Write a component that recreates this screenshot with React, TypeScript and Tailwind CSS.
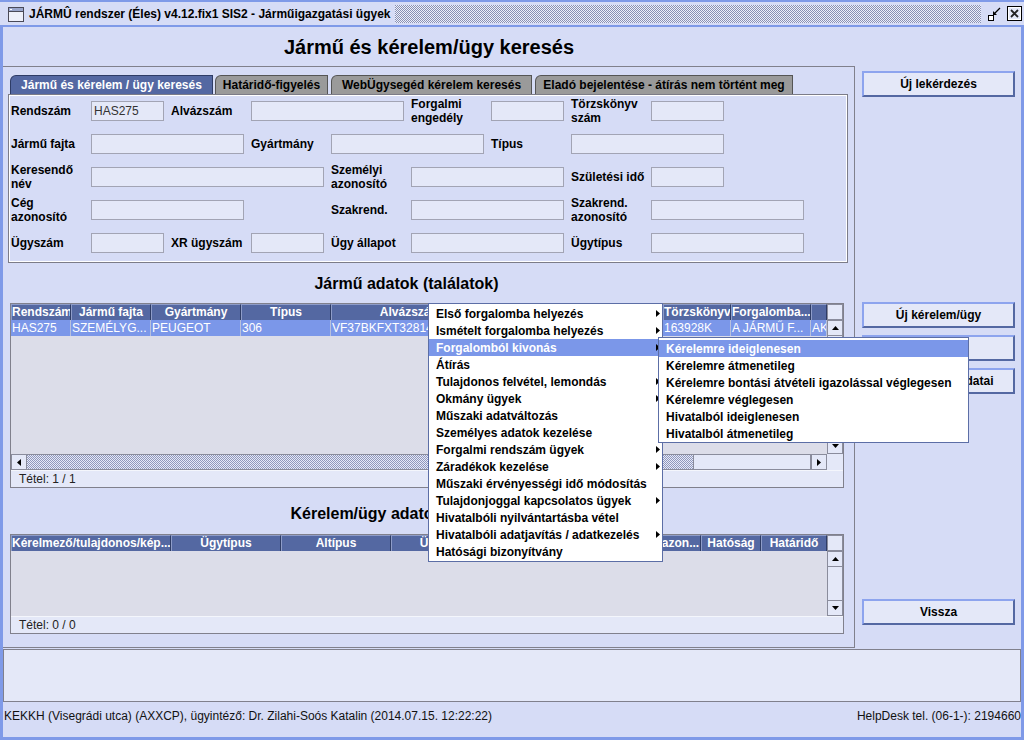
import React from "react";

type Field = { cls: string; lines?: string[]; input?: boolean; value?: string };

const formRows: Field[][] = [
  [
    { cls: "col-start-1", lines: ["Rendszám"] },
    { cls: "col-start-2 col-span-1", input: true, value: "HAS275" },
    { cls: "col-start-3", lines: ["Alvázszám"] },
    { cls: "col-start-4 col-span-2", input: true },
    { cls: "col-start-6", lines: ["Forgalmi", "engedély"] },
    { cls: "col-start-7 col-span-1", input: true },
    { cls: "col-start-8", lines: ["Törzskönyv", "szám"] },
    { cls: "col-start-9 col-span-1", input: true },
  ],
  [
    { cls: "col-start-1", lines: ["Jármű fajta"] },
    { cls: "col-start-2 col-span-2", input: true },
    { cls: "col-start-4", lines: ["Gyártmány"] },
    { cls: "col-start-5 col-span-2", input: true },
    { cls: "col-start-7", lines: ["Típus"] },
    { cls: "col-start-8 col-span-2", input: true },
  ],
  [
    { cls: "col-start-1", lines: ["Keresendő", "név"] },
    { cls: "col-start-2 col-span-3", input: true },
    { cls: "col-start-5", lines: ["Személyi", "azonosító"] },
    { cls: "col-start-6 col-span-2", input: true },
    { cls: "col-start-8", lines: ["Születési idő"] },
    { cls: "col-start-9 col-span-1", input: true },
  ],
  [
    { cls: "col-start-1", lines: ["Cég", "azonosító"] },
    { cls: "col-start-2 col-span-2", input: true },
    { cls: "col-start-5", lines: ["Szakrend."] },
    { cls: "col-start-6 col-span-2", input: true },
    { cls: "col-start-8", lines: ["Szakrend.", "azonosító"] },
    { cls: "col-start-9 col-span-2", input: true },
  ],
  [
    { cls: "col-start-1", lines: ["Ügyszám"] },
    { cls: "col-start-2 col-span-1", input: true },
    { cls: "col-start-3", lines: ["XR ügyszám"] },
    { cls: "col-start-4 col-span-1", input: true },
    { cls: "col-start-5", lines: ["Ügy állapot"] },
    { cls: "col-start-6 col-span-2", input: true },
    { cls: "col-start-8", lines: ["Ügytípus"] },
    { cls: "col-start-9 col-span-2", input: true },
  ],
];

const vehicleCols = [
  { w: "w-[60px]", h: "Rendszám", d: "HAS275" },
  { w: "w-[80px]", h: "Jármű fajta", d: "SZEMÉLYG..." },
  { w: "w-[90px]", h: "Gyártmány", d: "PEUGEOT" },
  { w: "w-[90px]", h: "Típus", d: "306" },
  { w: "w-[159px]", h: "Alvázszám", d: "VF37BKFXT32814653" },
  { w: "w-[173px]", h: "Forgalmi engedély", d: "LB48211" },
  { w: "w-[68px]", h: "Törzskönyv", d: "163928K" },
  { w: "w-[80px]", h: "Forgalomba...", d: "A JÁRMŰ F..." },
  { w: "w-[16px]", h: "", d: "AKTÍV" },
];

const caseCols = [
  { w: "w-[160px]", h: "Kérelmező/tulajdonos/kép..." },
  { w: "w-[110px]", h: "Ügytípus" },
  { w: "w-[110px]", h: "Altípus" },
  { w: "w-[110px]", h: "Ügyszám" },
  { w: "w-[119px]", h: "Állapot" },
  { w: "w-[81px]", h: "Ügyfél azon..." },
  { w: "w-[60px]", h: "Hatóság" },
  { w: "w-[66px]", h: "Határidő" },
];

const mainMenu = [
  { t: "Első forgalomba helyezés", sub: true },
  { t: "Ismételt forgalomba helyezés", sub: true },
  { t: "Forgalomból kivonás", sub: true, on: true },
  { t: "Átírás" },
  { t: "Tulajdonos felvétel, lemondás", sub: true },
  { t: "Okmány ügyek", sub: true },
  { t: "Műszaki adatváltozás" },
  { t: "Személyes adatok kezelése" },
  { t: "Forgalmi rendszám ügyek", sub: true },
  { t: "Záradékok kezelése", sub: true },
  { t: "Műszaki érvényességi idő módosítás" },
  { t: "Tulajdonjoggal kapcsolatos ügyek", sub: true },
  { t: "Hivatalbóli nyilvántartásba vétel" },
  { t: "Hivatalbóli adatjavítás / adatkezelés", sub: true },
  { t: "Hatósági bizonyítvány" },
];

const subMenu = [
  "Kérelemre ideiglenesen",
  "Kérelemre átmenetileg",
  "Kérelemre bontási átvételi igazolással véglegesen",
  "Kérelemre véglegesen",
  "Hivatalból ideiglenesen",
  "Hivatalból átmenetileg",
];

function Tri({ dir, color = "#000" }: { dir: "up" | "down" | "left" | "right"; color?: string }) {
  const vert = dir === "up" || dir === "down";
  const pts = { up: "0,4 7,4 3.5,0", down: "0,0 7,0 3.5,4", left: "4,0 4,7 0,3.5", right: "0,0 0,7 4,3.5" }[dir];
  return (
    <svg width={vert ? 7 : 4} height={vert ? 4 : 7} viewBox={vert ? "0 0 7 4" : "0 0 4 7"}>
      <polygon points={pts} fill={color} />
    </svg>
  );
}

// 1px checker texture (Swing Metal "bumps")
function Dots({ id, dot, bg, w, h }: { id: string; dot: string; bg: string; w: number; h: number }) {
  return (
    <svg width={w} height={h} className="block" shapeRendering="crispEdges">
      <defs>
        <pattern id={id} x="0" y="0" width="2" height="2" patternUnits="userSpaceOnUse">
          <rect x="0" y="0" width="2" height="2" fill={bg} />
          <rect x="0" y="0" width="1" height="1" fill={dot} />
          <rect x="1" y="1" width="1" height="1" fill={dot} />
        </pattern>
      </defs>
      <rect x="0" y="0" width={w} height={h} fill={`url(#${id})`} />
    </svg>
  );
}

function ScrollBtn({ dir }: { dir: "up" | "down" | "left" | "right" }) {
  return (
    <div className="w-[16px] h-[16px] shrink-0 bg-[#e4e8f8] border border-[#8a8c9c] flex items-center justify-center">
      <Tri dir={dir} />
    </div>
  );
}

function Btn({ children }: { children?: React.ReactNode }) {
  return (
    <div className="w-[153px] h-[26px] bg-[#e4e8f8] border-2 border-t-[#8da4ee] border-l-[#8da4ee] border-r-[#5468a2] border-b-[#5468a2] flex items-center justify-center text-[12px] font-bold whitespace-nowrap overflow-hidden">
      {children}
    </div>
  );
}

function Footer({ text }: { text: string }) {
  return (
    <div className="h-[17px] border-t border-[#f4f6fc] bg-[#e4e8f8] pl-[8px] text-[12px] leading-[16px] text-[#222]">
      {text}
    </div>
  );
}

function HeadCell({ w, t }: { w: string; t: string }) {
  return (
    <div className={`${w} shrink-0 h-[16px] bg-[#5468a2] text-white font-bold text-[12px] leading-[15px] text-center border-r border-t border-l border-l-[#8e9cc8] border-t-[#8e9cc8] border-r-[#2e3c66] overflow-hidden whitespace-nowrap`}>
      {t}
    </div>
  );
}

function WindowIcon() {
  return (
    <svg width="16" height="15" viewBox="0 0 16 15">
      <rect x="0.5" y="0.5" width="15" height="14" fill="#eef0fa" stroke="#4a4a58" />
      <rect x="1" y="1" width="14" height="3" fill="#9aa6cc" />
      <line x1="1" y1="4.5" x2="15" y2="4.5" stroke="#4a4a58" />
      <rect x="2" y="2" width="2" height="1" fill="#fff" />
    </svg>
  );
}

function IconifyIcon() {
  return (
    <svg width="13" height="14" viewBox="0 0 13 14">
      <rect x="0.5" y="8.5" width="5" height="5" fill="#fff" stroke="#000" />
      <line x1="12" y1="1" x2="6" y2="7" stroke="#000" strokeWidth="1.2" />
      <polygon points="5,8 5,4 9,8" fill="#000" />
    </svg>
  );
}

function CloseIcon() {
  return (
    <svg width="15" height="15" viewBox="0 0 15 15">
      <rect x="0.5" y="0.5" width="14" height="14" fill="#e4e8f8" stroke="#000" />
      <rect x="1.5" y="1.5" width="12" height="12" fill="none" stroke="#fff" />
      <path d="M4 4 L11 11 M11 4 L4 11" stroke="#222" strokeWidth="1.8" />
    </svg>
  );
}

export default function App() {
  return (
    <div className="relative w-[1024px] h-[740px] overflow-hidden bg-[#7f9ae8] flex flex-col text-black font-['Liberation_Sans',Arial,sans-serif]">
      {/* title bar */}
      <div className="h-[25px] shrink-0 border-t-2 border-[#7f9ae8] bg-[#d6dcf6] flex items-center">
        <div className="ml-[8px] mt-[1px] flex">
          <WindowIcon />
        </div>
        <span className="ml-[5px] text-[12px] font-bold whitespace-nowrap">
          JÁRMÛ rendszer (Éles) v4.12.fix1 SIS2 - Járműigazgatási ügyek
        </span>
        <div className="ml-[5px] w-[586px] h-[18px]">
          <Dots id="dots-title" dot="#8890b4" bg="#eef0fa" w={586} h={18} />
        </div>
        <div className="ml-[7px] mt-[1px] flex">
          <IconifyIcon />
        </div>
        <div className="ml-[6px] flex">
          <CloseIcon />
        </div>
      </div>

      <div className="mx-[3px] mb-[3px] mt-[2px] flex-1 bg-[#d6dcf6] flex flex-col">
        <div className="h-[621px] flex">
          {/* left side */}
          <div className="w-[852px] flex flex-col">
            <div className="h-[39px] flex items-center justify-center text-[20px] font-bold">
              Jármű és kérelem/ügy keresés
            </div>
            <div className="flex-1 border-t border-r border-b border-[#80808c] pt-[8px] pl-[5px]">
              {/* tabs */}
              <div className="flex h-[19px] items-end">
                <div className="ml-[2px] w-[203px] h-[19px] rounded-tl-[6px] bg-[#5468a2] border border-b-0 border-[#2e3c66] text-white text-[12px] font-bold flex items-center justify-center whitespace-nowrap">
                  Jármű és kérelem / ügy keresés
                </div>
                <div className="ml-[2px] w-[113px] h-[19px] rounded-tl-[6px] bg-[#9a9a9a] border border-b-0 border-[#555] text-[12px] font-bold flex items-center justify-center whitespace-nowrap">
                  Határidő-figyelés
                </div>
                <div className="ml-[3px] w-[201px] h-[19px] rounded-tl-[6px] bg-[#9a9a9a] border border-b-0 border-[#555] text-[12px] font-bold flex items-center justify-center whitespace-nowrap">
                  WebÜgysegéd kérelem keresés
                </div>
                <div className="ml-[3px] w-[258px] h-[19px] rounded-tl-[6px] bg-[#9a9a9a] border border-b-0 border-[#555] text-[12px] font-bold flex items-center justify-center whitespace-nowrap">
                  Eladó bejelentése - átírás nem történt meg
                </div>
              </div>

              {/* search form */}
              <div className="w-[840px] border border-[#7c7c88] shadow-[inset_1px_1px_0_#ffffff,inset_-1px_-1px_0_#ffffff] pt-[6px] pl-[2px] pb-[9px] flex flex-col gap-[13px]">
                {formRows.map((row, ri) => (
                  <div key={ri} className="grid grid-cols-[repeat(10,73px)] gap-x-[7px] h-[20px]">
                    {row.map((f, fi) =>
                      f.input ? (
                        <div
                          key={fi}
                          className={`${f.cls} h-[20px] bg-[#e4e8f8] border border-[#a2a4b4] pl-[2px] text-[12px] leading-[18px] text-[#333]`}
                        >
                          {f.value}
                        </div>
                      ) : (
                        <div
                          key={fi}
                          className={`${f.cls} h-[20px] flex flex-col justify-center text-[12px] font-bold leading-[14px] whitespace-nowrap`}
                        >
                          {f.lines!.map((l) => (
                            <span key={l}>{l}</span>
                          ))}
                        </div>
                      )
                    )}
                  </div>
                ))}
              </div>

              <div className="h-[40px] pt-[12px] pr-[49px] text-center text-[16px] font-bold leading-[18px]">
                Jármű adatok (találatok)
              </div>

              {/* vehicle table */}
              <div className="ml-[2px] w-[834px] border border-[#80808c] bg-[#dcdde9] flex flex-col">
                <div className="flex h-[150px]">
                  <div className="w-[816px] flex flex-col">
                    <div className="flex h-[16px]">
                      {vehicleCols.map((c, i) => (
                        <HeadCell key={i} w={c.w} t={c.h} />
                      ))}
                    </div>
                    <div className="flex h-[16px]">
                      {vehicleCols.map((c, i) => (
                        <div
                          key={i}
                          className={`${c.w} shrink-0 h-[16px] bg-[#7b97e9] text-white text-[12px] leading-[16px] pl-[1px] border-r border-[#b8c0dc] overflow-hidden whitespace-nowrap`}
                        >
                          {c.d}
                        </div>
                      ))}
                    </div>
                  </div>
                  <div className="w-[16px] flex flex-col">
                    <div className="h-[16px] bg-[#e4e8f8] border border-[#8a8c9c]" />
                    <ScrollBtn dir="up" />
                    <div className="flex-1 bg-[#e4e8f8] border-x border-[#8a8c9c]" />
                    <ScrollBtn dir="down" />
                  </div>
                </div>
                <div className="flex h-[16px]">
                  <ScrollBtn dir="left" />
                  <div className="w-[666px] h-[16px] border-y border-[#8a8c9c]">
                    <Dots id="dots-hscroll" dot="#9098bc" bg="#e6e9f8" w={666} h={14} />
                  </div>
                  <div className="w-[118px] h-[16px] bg-[#e4e8f8] border border-[#8a8c9c]" />
                  <ScrollBtn dir="right" />
                  <div className="w-[16px] h-[16px] bg-[#e4e8f8]" />
                </div>
                <Footer text="Tétel: 1 / 1" />
              </div>

              <div className="h-[46px] pt-[17px] pr-[49px] text-center text-[16px] font-bold leading-[18px] whitespace-nowrap">
                Kérelem/ügy adatok (találatok)
              </div>

              {/* case table */}
              <div className="ml-[2px] w-[834px] border border-[#80808c] bg-[#dcdde9] flex flex-col">
                <div className="flex h-[81px]">
                  <div className="w-[816px] flex flex-col">
                    <div className="flex h-[16px]">
                      {caseCols.map((c, i) => (
                        <HeadCell key={i} w={c.w} t={c.h} />
                      ))}
                    </div>
                  </div>
                  <div className="w-[16px] flex flex-col">
                    <div className="h-[16px] bg-[#e4e8f8] border border-[#8a8c9c]" />
                    <ScrollBtn dir="up" />
                    <div className="flex-1 bg-[#e4e8f8] border-x border-[#8a8c9c]" />
                    <ScrollBtn dir="down" />
                  </div>
                </div>
                <Footer text="Tétel: 0 / 0" />
              </div>
            </div>
          </div>

          {/* right side buttons */}
          <div className="w-[166px] pl-[7px] pt-[44px] flex flex-col">
            <Btn>Új lekérdezés</Btn>
            <div className="mt-[205px] flex flex-col gap-[7px]">
              <Btn>Új kérelem/ügy</Btn>
              <Btn>Törlés</Btn>
              <Btn>Kérelem/ügy adatai</Btn>
            </div>
            <div className="mt-[205px]">
              <Btn>Vissza</Btn>
            </div>
          </div>
        </div>

        {/* message area */}
        <div className="mt-[1px] h-[53px] border border-[#80808c] bg-[#e4e8f8]" />

        {/* status bar */}
        <div className="h-[35px] pt-[7px] pl-[1px] flex justify-between text-[12px] leading-[14px] text-[#111] whitespace-nowrap">
          <span>KEKKH (Visegrádi utca) (AXXCP), ügyintéző: Dr. Zilahi-Soós Katalin (2014.07.15. 12:22:22)</span>
          <span>HelpDesk tel. (06-1-): 2194660</span>
        </div>
      </div>

      {/* popup menu */}
      <div className="absolute left-[428px] top-[303px] w-[235px] bg-white border border-[#5c6ea6] py-[1px] flex flex-col">
        {mainMenu.map((m) => (
          <div
            key={m.t}
            className={`h-[17px] flex items-center pl-[7px] pr-[2px] text-[12px] font-bold whitespace-nowrap ${m.on ? "bg-[#7b97e9] text-white" : ""}`}
          >
            <span>{m.t}</span>
            {m.sub && (
              <span className="ml-auto flex">
                <Tri dir="right" />
              </span>
            )}
          </div>
        ))}
      </div>

      {/* submenu */}
      <div className="absolute left-[658px] top-[337px] w-[311px] bg-white border border-[#5c6ea6] pt-[2px] flex flex-col">
        {subMenu.map((s, i) => (
          <div
            key={s}
            className={`h-[17px] flex items-center pl-[7px] text-[12px] font-bold whitespace-nowrap ${i === 0 ? "bg-[#7b97e9] text-white" : ""}`}
          >
            {s}
          </div>
        ))}
      </div>
    </div>
  );
}
